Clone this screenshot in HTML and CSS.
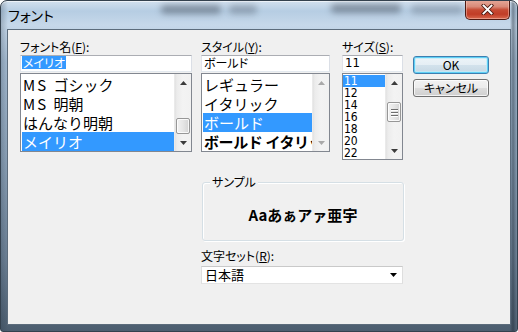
FILE: index.html
```html
<!DOCTYPE html>
<html lang="ja">
<head>
<meta charset="utf-8">
<title>フォント</title>
<link rel="stylesheet" href="styles.css">
</head>
<body>
<div class="window">
  <div class="titlebar">
    <span class="smudge s1"></span>
    <span class="smudge s2"></span>
    <span class="smudge s3"></span>
    <span class="smudge s4"></span>
    <span class="title">フォント</span>
    <div class="close">
      <svg width="13" height="11" viewBox="0 0 13 11">
        <path d="M2.5 1.5 L10.5 9.5 M10.5 1.5 L2.5 9.5" stroke="#4a1b12" stroke-width="3.6" stroke-linecap="square"/>
        <path d="M2.5 1.5 L10.5 9.5 M10.5 1.5 L2.5 9.5" stroke="#ffffff" stroke-width="1.9" stroke-linecap="square"/>
      </svg>
    </div>
  </div>
  <div class="client">
    <div class="top">
      <div class="col col-font">
        <div class="label">フォント名(<u>F</u>):</div>
        <div class="input"><span class="hl">メイリオ</span></div>
        <div class="list list-font">
          <div class="items">
            <div class="item"><span class="mono">MS </span>ゴシック</div>
            <div class="item"><span class="mono">MS </span>明朝</div>
            <div class="item">はんなり明朝</div>
            <div class="item sel">メイリオ</div>
          </div>
          <div class="vscroll">
            <div class="abtn"><svg width="7" height="4" viewBox="0 0 7 4"><path d="M0 4 L3.5 0 L7 4 Z" fill="#3c3c3c"/></svg></div>
            <div class="track track-end"><div class="thumb"></div></div>
            <div class="abtn"><svg width="7" height="4" viewBox="0 0 7 4"><path d="M0 0 L7 0 L3.5 4 Z" fill="#3c3c3c"/></svg></div>
          </div>
        </div>
      </div>
      <div class="col col-style">
        <div class="label">スタイル(<u>Y</u>):</div>
        <div class="input"><span class="txt">ボールド</span></div>
        <div class="list list-style">
          <div class="items">
            <div class="item">レギュラー</div>
            <div class="item">イタリック</div>
            <div class="item sel">ボールド</div>
            <div class="item bold">ボールド イタリック</div>
          </div>
          <div class="vscroll disabled">
            <div class="abtn"><svg width="7" height="4" viewBox="0 0 7 4"><path d="M0 4 L3.5 0 L7 4 Z" fill="#a9a9a9"/></svg></div>
            <div class="track"></div>
            <div class="abtn"><svg width="7" height="4" viewBox="0 0 7 4"><path d="M0 0 L7 0 L3.5 4 Z" fill="#a9a9a9"/></svg></div>
          </div>
        </div>
      </div>
      <div class="col col-size">
        <div class="label">サイズ(<u>S</u>):</div>
        <div class="input"><span class="txt num">11</span></div>
        <div class="list list-size">
          <div class="items">
            <div class="item sel">11</div>
            <div class="item">12</div>
            <div class="item">14</div>
            <div class="item">16</div>
            <div class="item">18</div>
            <div class="item">20</div>
            <div class="item">22</div>
          </div>
          <div class="vscroll">
            <div class="abtn"><svg width="7" height="4" viewBox="0 0 7 4"><path d="M0 4 L3.5 0 L7 4 Z" fill="#3c3c3c"/></svg></div>
            <div class="track"><div class="thumb thumb-size"><span class="grip"></span><span class="grip"></span><span class="grip"></span></div></div>
            <div class="abtn"><svg width="7" height="4" viewBox="0 0 7 4"><path d="M0 0 L7 0 L3.5 4 Z" fill="#3c3c3c"/></svg></div>
          </div>
        </div>
      </div>
      <div class="buttons">
        <div class="btn default">OK</div>
        <div class="btn">キャンセル</div>
      </div>
    </div>
    <div class="lower">
      <div class="group">
        <span class="legend">サンプル</span>
        <div class="sample">Aaあぁアァ亜宇</div>
      </div>
      <div class="label">文字セット(<u>R</u>):</div>
      <div class="combo">
        <span>日本語</span>
        <svg width="7" height="4" viewBox="0 0 7 4"><path d="M0 0 L7 0 L3.5 4 Z" fill="#000"/></svg>
      </div>
    </div>
  </div>
</div>
</body>
</html>
```

FILE: styles.css
```css
* { box-sizing: border-box; }
html, body { margin: 0; padding: 0; }
body {
  width: 518px;
  height: 332px;
  overflow: hidden;
  background: #ffffff;
  font-family: "Noto Sans CJK JP", sans-serif;
  font-size: 12px;
  color: #000;
  font-feature-settings: "palt";
}
.window {
  width: 518px;
  height: 332px;
  border: 1px solid #34414e;
  border-radius: 7px 7px 3px 3px;
  padding: 0 6px 6px 6px;
  display: flex;
  flex-direction: column;
  background:
    linear-gradient(to right, rgba(40,55,70,0.25) 0, rgba(255,255,255,0) 7px, rgba(255,255,255,0) 509px, rgba(30,40,52,0.45) 512px, rgba(120,140,160,0.2) 516px),
    linear-gradient(to bottom, #d2e0ee 0, #b6cde3 10px, #c6d8ea 24px, #a6bcd2 60px, #8ca2b8 160px, #6c8095 260px, #4b5c6e 332px);
  box-shadow: inset 0 1px 0 rgba(255,255,255,0.6);
  overflow: hidden;
}
.titlebar {
  position: relative;
  height: 28px;
  margin: 0 -6px;
  padding: 3px 7px 0 7px;
  display: flex;
  align-items: flex-start;
  flex: none;
}
.smudge {
  position: absolute;
  height: 9px;
  top: 4px;
  background: rgba(55,65,78,0.45);
  filter: blur(3px);
  border-radius: 4px;
}
.s1 { left: 160px; width: 60px; }
.s2 { left: 228px; width: 28px; opacity: 0.7; }
.s3 { left: 330px; width: 70px; top: 3px; }
.s4 { left: 410px; width: 52px; opacity: 0.6; }
.title {
  position: relative;
  font-size: 14px;
  line-height: 22px;
  color: #000;
}
.close {
  margin-left: auto;
  margin-top: -4px;
  width: 45px;
  height: 20px;
  border: 1px solid #4f1a12;
  border-top: none;
  border-radius: 0 0 5px 5px;
  background: linear-gradient(to bottom, #e6a99a 0, #d98a78 35%, #c64a33 52%, #c13d27 75%, #d9694f 100%);
  box-shadow: inset 0 0 0 1px rgba(255,210,200,0.45);
  display: flex;
  align-items: center;
  justify-content: center;
  position: relative;
}
.client {
  flex: none;
  width: 504px;
  height: 296px;
  border: 1px solid #5c6c7c;
  background: #f0f0f0;
  padding: 9px 0 0 12px;
}
.top {
  display: flex;
  align-items: flex-start;
}
.col-font { width: 172px; }
.col-style { width: 129px; margin-left: 9px; }
.col-size { width: 61px; margin-left: 12px; }
.buttons {
  width: 76px;
  margin-left: 10px;
  padding-top: 17px;
  display: flex;
  flex-direction: column;
  gap: 5px;
}
.label {
  height: 16px;
  line-height: 16px;
  font-size: 12px;
  white-space: nowrap;
}
.label u { text-underline-offset: 1px; }
.input {
  height: 17px;
  margin-bottom: 1px;
  background: #fff;
  border: 1px solid;
  border-color: #abadb3 #dbdfe6 #e3e9ef #e2e3ea;
  padding: 0 1px;
  white-space: nowrap;
  overflow: hidden;
}
.hl {
  display: inline-block;
  vertical-align: top;
  height: 13px;
  line-height: 13px;
  padding: 0 1px;
  background: #3399ff;
  color: #fff;
  font-size: 12px;
}
.txt {
  display: inline-block;
  vertical-align: top;
  line-height: 14px;
  padding-left: 1px;
  font-size: 12px;
}
.num {
  font-family: "Liberation Sans Narrow", "DejaVu Sans Condensed", "Liberation Sans", sans-serif;
  font-size: 13px;
}
.list {
  display: flex;
  background: #fff;
  border: 1px solid #828790;
}
.list-font, .list-style { height: 79px; }
.list-size { height: 87px; }
.items {
  flex: 1;
  min-width: 0;
  padding: 1px 0 0 1px;
  overflow: hidden;
}
.item {
  height: 19px;
  line-height: 19px;
  font-size: 15px;
  padding-left: 1px;
  white-space: nowrap;
  overflow: hidden;
  font-feature-settings: normal;
}
.mono { letter-spacing: 2px; }
.item.sel { background: #3399ff; color: #fff; }
.item.bold { font-weight: bold; letter-spacing: -0.4px; }
.list-size .items { padding-left: 0; }
.list-size .item {
  height: 12px;
  line-height: 12px;
  font-size: 12px;
  font-family: "Liberation Sans Narrow", "DejaVu Sans Condensed", "Liberation Sans", sans-serif;
  overflow: visible;
}
.vscroll {
  width: 17px;
  flex: none;
  display: flex;
  flex-direction: column;
  background: linear-gradient(to right, #e2e2e2 0, #ececec 2px, #f3f3f3 8px, #f1f1f1 100%);
  border-left: 1px solid #eaeaea;
}
.abtn {
  height: 17px;
  flex: none;
  display: flex;
  align-items: center;
  justify-content: center;
}
.track {
  flex: 1;
  display: flex;
  flex-direction: column;
  padding: 0 1px;
}
.track-end { justify-content: flex-end; }
.thumb {
  height: 16px;
  border: 1px solid #979797;
  border-radius: 2px;
  background: linear-gradient(to right, #f2f2f2 0, #e6e6e6 50%, #d4d4d4 100%);
  box-shadow: inset 0 0 0 1px rgba(255,255,255,0.8);
}
.thumb-size {
  margin-top: 11px;
  height: 20px;
  display: flex;
  flex-direction: column;
  align-items: center;
  justify-content: center;
  gap: 2px;
}
.grip {
  width: 7px;
  height: 1px;
  background: #6f6f6f;
  box-shadow: 0 1px 0 #fff;
}
.btn {
  height: 18px;
  border: 1px solid #707070;
  border-radius: 3px;
  background: linear-gradient(to bottom, #f2f2f2 0, #ebebeb 50%, #dddddd 50%, #cfcfcf 100%);
  box-shadow: inset 0 0 0 1px rgba(255,255,255,0.75);
  text-align: center;
  line-height: 16px;
  font-size: 12px;
}
.btn.default {
  border-color: #3c7fb1;
  box-shadow: inset 0 0 0 1px #5fd0f5, inset 0 0 0 2px rgba(190,235,250,0.7);
  background: linear-gradient(to bottom, #edf4f8 0, #e5eef4 50%, #d3e2ec 50%, #c6d8e4 100%);
}
.lower {
  margin-left: 181px;
  width: 203px;
}
.group {
  position: relative;
  margin-top: 22px;
  margin-left: 1px;
  width: 202px;
  height: 59px;
  border: 1px solid #d5dfe5;
  border-radius: 3px;
  box-shadow: inset 1px 1px 0 #fff, 1px 1px 0 #fff;
  display: flex;
  align-items: center;
  justify-content: center;
  padding-top: 6px;
}
.legend {
  position: absolute;
  top: -9px;
  left: 7px;
  padding: 0 2px;
  line-height: 16px;
  background: #f0f0f0;
  font-size: 12px;
}
.sample {
  font-size: 15px;
  font-weight: bold;
  line-height: 20px;
  font-feature-settings: normal;
}
.lower .label { margin-top: 7px; }
.combo {
  margin-top: 2px;
  width: 202px;
  height: 18px;
  background: #fff;
  border: 1px solid;
  border-color: #c9c9c9 #dedede #e3e3e3 #dedede;
  display: flex;
  align-items: center;
  justify-content: space-between;
  padding: 0 5px 0 3px;
  font-size: 13px;
  line-height: 16px;
}
```
